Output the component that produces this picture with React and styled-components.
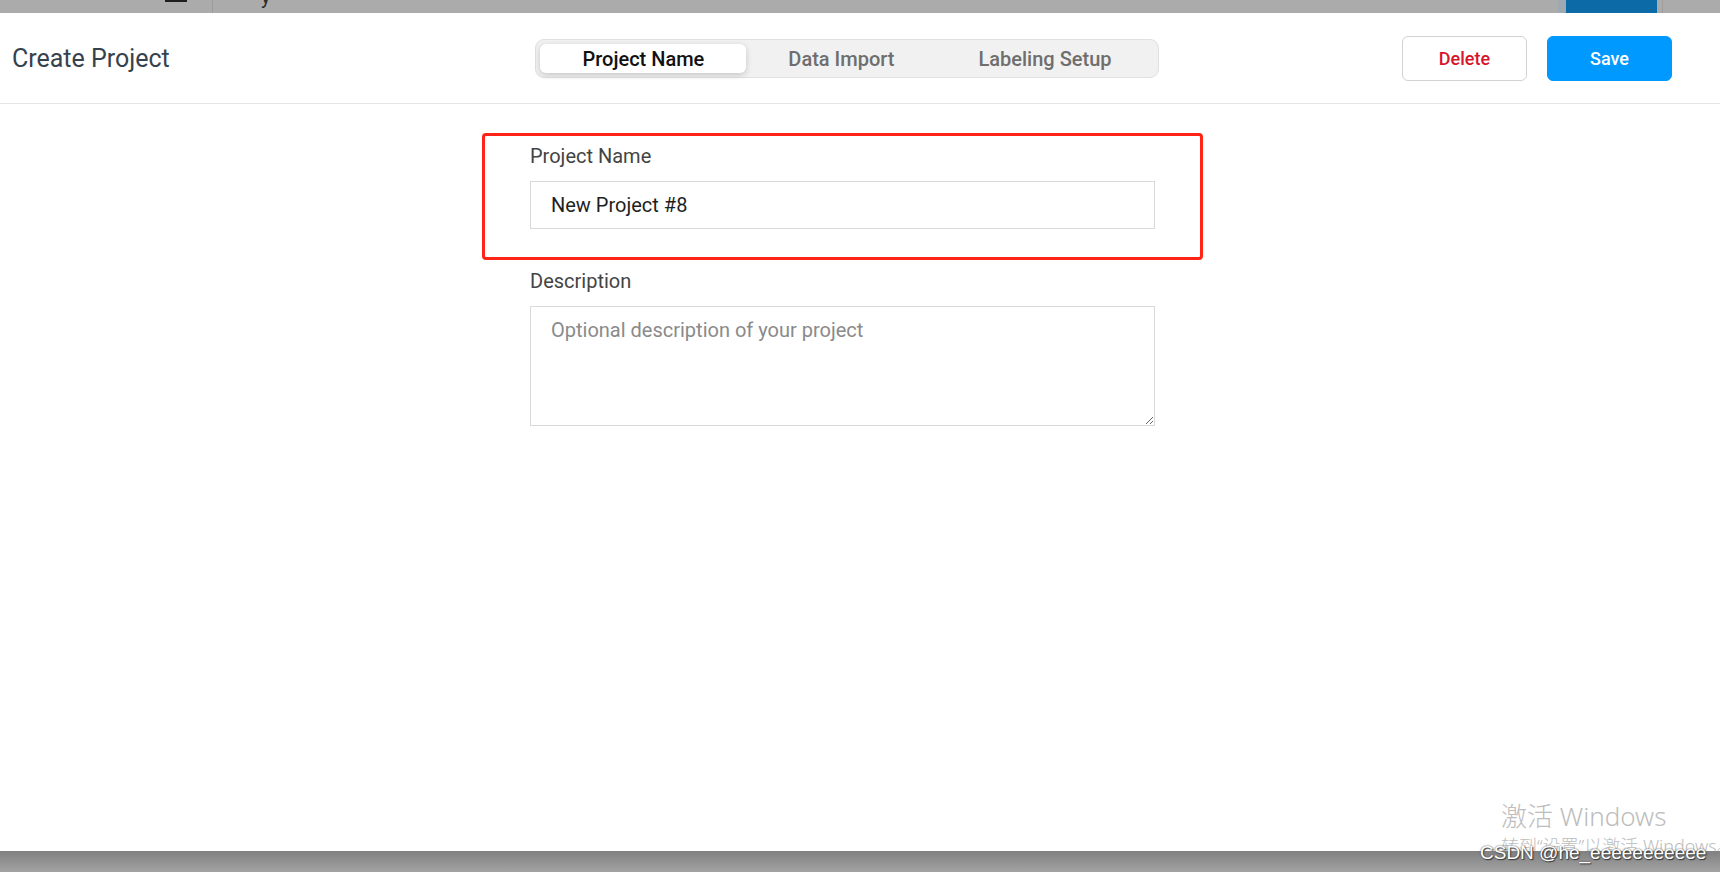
import React from 'react';
import styled, { createGlobalStyle } from 'styled-components';

const GlobalStyle = createGlobalStyle`
  html, body {
    margin: 0;
    padding: 0;
    background: #ffffff;
  }
  body {
    font-family: Roboto, "Noto Sans", sans-serif;
  }
  * {
    box-sizing: border-box;
  }
`;

const Page = styled.div`
  position: relative;
  width: 1720px;
  height: 872px;
  display: flex;
  flex-direction: column;
  overflow: hidden;
`;

const BackdropStrip = styled.div`
  height: 13px;
  background: #ababab;
  display: flex;
  align-items: stretch;
  padding-left: 165px;
  overflow: hidden;
`;

const MenuMark = styled.span`
  width: 22px;
  height: 2px;
  background: #1e1e1e;
`;

const StripDivider = styled.span`
  width: 1px;
  margin-left: 25px;
  background: #9b9b9b;
`;

const CutText = styled.span`
  margin-left: 48px;
  font-size: 20px;
  line-height: 20px;
  margin-top: -13px;
  color: #2a2a2a;
`;

const StripRight = styled.div`
  margin-left: auto;
  display: flex;
  align-items: stretch;
`;

const DimButton = styled.span`
  width: 99px;
  border-left: 8px solid #9fa9b2;
  background: #0c6aa6;
`;

const StripEdge = styled.span`
  width: 58px;
  border-left: 1px solid #9e9e9e;
  margin-left: 5px;
`;

const Modal = styled.div`
  position: relative;
  flex: 1;
  background: #ffffff;
  display: flex;
  flex-direction: column;
  overflow: hidden;
`;

const Header = styled.header`
  height: 91px;
  border-bottom: 1px solid #e5e5e5;
  display: grid;
  grid-template-columns: 1fr auto 1fr;
  align-items: center;
  padding: 1px 48px 0 12px;
`;

const Title = styled.h1`
  margin: 0;
  font-size: 25px;
  font-weight: 400;
  color: #36424d;
`;

const Tabs = styled.nav`
  margin-left: 10px;
  height: 39px;
  display: flex;
  padding: 4px;
  background: #f1f1f1;
  border: 1px solid #e0e0e0;
  border-radius: 9px;
`;

const Tab = styled.button`
  border: none;
  font-family: Roboto, sans-serif;
  font-size: 20px;
  font-weight: 500;
  padding: 0 42px;
  border-radius: 6px;
  cursor: pointer;
  color: ${({ $active }) => ($active ? '#111111' : '#6e6e6e')};
  background: ${({ $active }) => ($active ? '#ffffff' : 'transparent')};
  box-shadow: ${({ $active }) => ($active ? '0 2px 6px rgba(0, 0, 0, 0.18)' : 'none')};
`;

const Actions = styled.div`
  justify-self: end;
  display: flex;
  gap: 20px;
`;

const Button = styled.button`
  width: 125px;
  height: 45px;
  border-radius: 6px;
  font-family: Roboto, sans-serif;
  font-size: 18px;
  font-weight: 500;
  cursor: pointer;
  color: ${({ $primary }) => ($primary ? '#ffffff' : '#d6162a')};
  background: ${({ $primary }) => ($primary ? '#0099ff' : '#ffffff')};
  border: 1px solid ${({ $primary }) => ($primary ? '#0099ff' : '#d2d2d2')};
`;

const Body = styled.main`
  display: flex;
  justify-content: center;
  padding: 29px 35px 0 0;
`;

const Form = styled.form`
  width: 625px;
  display: flex;
  flex-direction: column;
`;

const Highlight = styled.div`
  margin: 0 -48px 9px;
  padding: 8px 45px 28px;
  border: 3px solid #ff2318;
  border-radius: 4px;
`;

const Label = styled.label`
  display: block;
  font-size: 20px;
  line-height: 24px;
  color: #444444;
  margin-bottom: ${({ $gap }) => $gap || 13}px;
`;

const TextInput = styled.input`
  display: block;
  width: 100%;
  height: 48px;
  padding: 0 20px;
  border: 1px solid #d9d9d9;
  border-radius: 0;
  font-family: Roboto, sans-serif;
  font-size: 20px;
  color: #1f1f1f;
  outline: none;
`;

const TextArea = styled.textarea`
  display: block;
  width: 100%;
  height: 120px;
  padding: 11px 20px;
  border: 1px solid #d9d9d9;
  border-radius: 0;
  font-family: Roboto, sans-serif;
  font-size: 20px;
  line-height: 24px;
  color: #1f1f1f;
  outline: none;

  &::placeholder {
    color: #8a8a8a;
  }
`;

const Watermark = styled.div`
  position: absolute;
  left: 1501px;
  top: ${({ $top }) => $top}px;
  font-family: "Noto Sans", "Noto Sans CJK SC", sans-serif;
  font-size: ${({ $size }) => $size}px;
  line-height: 1.2;
  font-weight: 300;
  color: #bdbdbd;
  white-space: nowrap;
  pointer-events: none;
`;

const BottomStrip = styled.div`
  height: 21px;
  background: linear-gradient(#808080, #a3a3a3);
`;

const Credit = styled.div`
  position: absolute;
  left: 1480px;
  top: 842px;
  font-family: "Liberation Sans", Arial, sans-serif;
  font-size: 19px;
  color: #ffffff;
  text-shadow: 0 0 2px #3a3a3a, 1px 1px 1px #3a3a3a;
  white-space: nowrap;
  pointer-events: none;
`;

const tabs = ['Project Name', 'Data Import', 'Labeling Setup'];

const App = () => {
  return (
    <>
      <GlobalStyle />
      <Page>
        <BackdropStrip>
          <MenuMark />
          <StripDivider />
          <CutText>y</CutText>
          <StripRight>
            <DimButton />
            <StripEdge />
          </StripRight>
        </BackdropStrip>
        <Modal>
          <Header>
            <Title>Create Project</Title>
            <Tabs>
              {tabs.map((tab, i) => (
                <Tab key={tab} type="button" $active={i === 0}>
                  {tab}
                </Tab>
              ))}
            </Tabs>
            <Actions>
              <Button type="button">Delete</Button>
              <Button type="button" $primary>
                Save
              </Button>
            </Actions>
          </Header>
          <Body>
            <Form onSubmit={(e) => e.preventDefault()}>
              <Highlight>
                <Label htmlFor="project-name">Project Name</Label>
                <TextInput id="project-name" defaultValue="New Project #8" />
              </Highlight>
              <Label htmlFor="project-description">Description</Label>
              <TextArea id="project-description" placeholder="Optional description of your project" />
            </Form>
          </Body>
          <Watermark $top={788} $size={26}>
            激活 Windows
          </Watermark>
          <Watermark $top={823} $size={18}>
            转到“设置”以激活 Windows。
          </Watermark>
        </Modal>
        <BottomStrip />
        <Credit>CSDN @he_eeeeeeeeeee</Credit>
      </Page>
    </>
  );
};

export default App;
